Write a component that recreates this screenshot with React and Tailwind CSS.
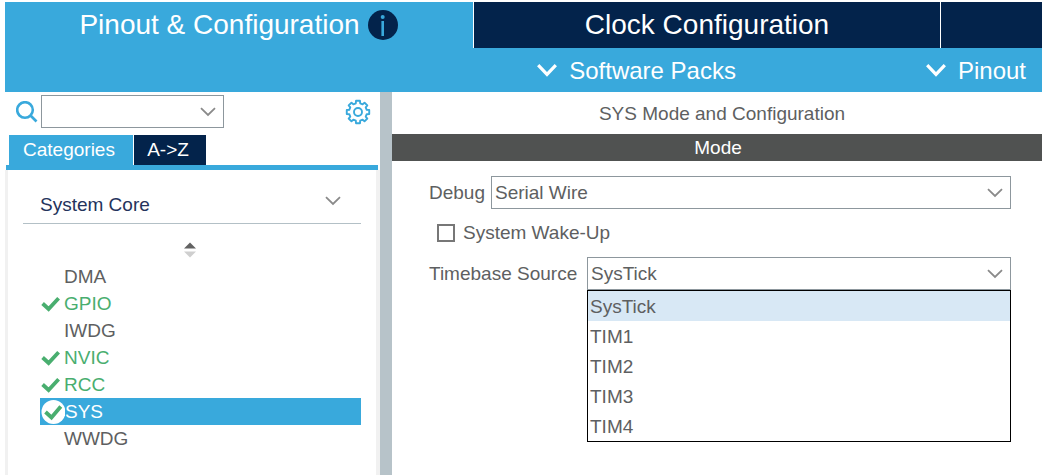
import React, { useState } from 'react';

const peripherals = [
  { name: 'DMA', enabled: false },
  { name: 'GPIO', enabled: true },
  { name: 'IWDG', enabled: false },
  { name: 'NVIC', enabled: true },
  { name: 'RCC', enabled: true },
  { name: 'SYS', enabled: true },
  { name: 'WWDG', enabled: false },
];

const timebaseSources = ['SysTick', 'TIM1', 'TIM2', 'TIM3', 'TIM4'];

// Outline of an 8-tooth gear centred on 13,13
const gearPoints = Array.from({ length: 8 }, (_, i) =>
  [[-14, 9], [-10, 11.4], [10, 11.4], [14, 9]].map(([offset, r]) => {
    const a = ((i * 45 + offset) * Math.PI) / 180;
    return `${(13 + r * Math.sin(a)).toFixed(2)},${(13 - r * Math.cos(a)).toFixed(2)}`;
  }).join(' ')
).join(' ');

function GearIcon() {
  return (
    <svg width="26" height="26" viewBox="0 0 26 26" fill="none" stroke="#39a9dc" strokeWidth="1.9" strokeLinejoin="round">
      <polygon points={gearPoints} />
      <circle cx="13" cy="13" r="4" />
    </svg>
  );
}

function SearchIcon() {
  return (
    <svg className="shrink-0" width="22" height="22" viewBox="0 0 22 22" fill="none" stroke="#39a9dc" strokeWidth="2.6">
      <circle cx="9" cy="9" r="7.8" />
      <path d="M14.5 14.5l6 6" />
    </svg>
  );
}

function Chevron({ className = '' }) {
  return (
    <svg className={className} width="16" height="10" viewBox="0 0 16 10" fill="none" stroke="#8a8a8a" strokeWidth="1.8">
      <path d="M1 1.2l7 6.8 7-6.8" />
    </svg>
  );
}

function MenuChevron() {
  return (
    <svg width="20" height="14" viewBox="0 0 20 14" fill="none" stroke="#fff" strokeWidth="3.2">
      <path d="M1.2 1.2L10 10.4l8.8-9.2" />
    </svg>
  );
}

function InfoIcon() {
  return (
    <svg width="30" height="30" viewBox="0 0 30 30">
      <circle cx="15" cy="15" r="15" fill="#03234b" />
      <circle cx="14.7" cy="7" r="2" fill="#39a9dc" />
      <path d="M14.7 11v15" stroke="#39a9dc" strokeWidth="2.6" />
    </svg>
  );
}

function Check({ circled }) {
  return (
    <svg width="24" height="24" viewBox="0 0 24 24" fill="none" className="shrink-0">
      {circled && <circle cx="12.5" cy="12" r="12" fill="#fff" />}
      <path
        d={circled ? 'M4.5 12l6 5.5L19.8 6.6' : 'M2.6 11.5l6 5.5L18.6 6.2'}
        stroke="#49ae6f"
        strokeWidth="3.8"
      />
    </svg>
  );
}

function Header() {
  return (
    <header className="bg-[#39a9dc] text-white">
      <nav className="grid grid-cols-[468fr_467fr_102fr] h-[45px] text-[28px] leading-[46px]">
        <button className="flex items-center justify-center gap-2 pr-px">
          Pinout &amp; Configuration
          <InfoIcon />
        </button>
        <button className="bg-[#03234b] border-l border-white">Clock Configuration</button>
        <button className="bg-[#03234b] border-l border-white" aria-label="Project Manager" />
      </nav>
      <div className="flex justify-end gap-[190px] h-[45px] pt-[2px] pr-4 text-2xl">
        <button className="flex items-center gap-3">
          <MenuChevron />
          Software Packs
        </button>
        <button className="flex items-center gap-3">
          <MenuChevron />
          Pinout
        </button>
      </div>
    </header>
  );
}

function Sidebar({ selected, onSelect }) {
  const [tab, setTab] = useState('categories');

  return (
    <aside className="w-[375px] shrink-0 flex flex-col">
      <div className="flex items-center h-[43px] pl-[11px] pr-[9px] pb-1">
        <SearchIcon />
        <div className="relative ml-[3px]">
          <input
            aria-label="Search"
            className="block w-[183px] h-[33px] border border-[#8d979d] pl-1 pr-8 outline-none"
          />
          <Chevron className="absolute right-2 top-3" />
        </div>
        <button className="ml-auto" aria-label="Settings">
          <GearIcon />
        </button>
      </div>

      <div className="flex gap-px h-[30px] pl-1 leading-[30px] text-white">
        <button
          onClick={() => setTab('categories')}
          className={`w-[124px] pr-1 ${tab === 'categories' ? 'bg-[#39a9dc]' : 'bg-[#03234b]'}`}
        >
          Categories
        </button>
        <button
          onClick={() => setTab('az')}
          className={`w-[72px] pr-1 ${tab === 'az' ? 'bg-[#39a9dc]' : 'bg-[#03234b]'}`}
        >
          A-&gt;Z
        </button>
      </div>

      <div className="h-[5px] ml-px mr-[2px] bg-[#39a9dc]" />
      <div className="flex-1 border-l-3 border-r-4 border-[#f1f1f1] px-[15px]">
        <button className="flex items-center justify-between w-full h-[54px] pt-4 pl-[17px] pr-5 border-b border-[#b3c0c6] text-[#24335c]">
          System Core
          <Chevron className="mb-2" />
        </button>

        <div className="flex justify-center h-[39px] pt-[18px] pr-1">
          <svg width="12" height="16" viewBox="0 0 12 16">
            <path d="M0 6.5L6 .5l6 6z" fill="#626262" />
            <path d="M0 9.5h12l-6 6z" fill="#cfcfcf" />
          </svg>
        </div>

        <ul className="pl-[17px]">
          {peripherals.map(({ name, enabled }) => {
            const active = name === selected;
            return (
              <li key={name}>
                <button
                  onClick={() => onSelect(name)}
                  className={`flex items-center w-full h-[27px] ${active ? 'bg-[#39a9dc] text-white pl-px' : enabled ? 'text-[#49ae6f]' : 'text-[#5e5f61]'}`}
                >
                  {enabled ? <Check circled={active} /> : <span className="w-6" />}
                  {name}
                </button>
              </li>
            );
          })}
        </ul>
      </div>
    </aside>
  );
}

function SelectBox({ id, value, onChange, options }) {
  return (
    <div className="relative flex-1">
      <select
        id={id}
        value={value}
        onChange={(e) => onChange(e.target.value)}
        className="appearance-none block w-full h-[33px] pl-[3px] pr-8 border border-[#8d979d] bg-white outline-none"
      >
        {options.map((option) => (
          <option key={option}>{option}</option>
        ))}
      </select>
      <Chevron className="absolute right-2 top-3 pointer-events-none" />
    </div>
  );
}

function ModePanel({ name }) {
  const [debug, setDebug] = useState('Serial Wire');
  const [wakeUp, setWakeUp] = useState(false);
  const [timebase, setTimebase] = useState('SysTick');
  const [open, setOpen] = useState(true);

  return (
    <main className="flex-1 text-[#5e5f61]">
      <h1 className="h-[42px] pl-[10px] leading-[44px] text-center">{name} Mode and Configuration</h1>
      <h2 className="h-[27px] pl-[2px] leading-[27px] text-center bg-[#505251] text-white">Mode</h2>

      <div className="pt-[15px] pl-[37px] pr-[31px]">
        <div className="flex items-center gap-[6px]">
          <label htmlFor="debug">Debug</label>
          <SelectBox
            id="debug"
            value={debug}
            onChange={setDebug}
            options={['Disable', 'Serial Wire', 'JTAG (4 pins)', 'JTAG (5 pins)']}
          />
        </div>

        <label className="flex items-center gap-2 h-12 pl-2">
          <input
            type="checkbox"
            checked={wakeUp}
            onChange={(e) => setWakeUp(e.target.checked)}
            className="appearance-none size-[18px] border-2 border-[#777] checked:bg-[#39a9dc]"
          />
          System Wake-Up
        </label>

        <div className="flex items-center gap-[6px]">
          <label htmlFor="timebase" className="min-w-[152px]">Timebase Source</label>
          <div className="relative flex flex-1">
            <SelectBox id="timebase" value={timebase} onChange={setTimebase} options={timebaseSources} />
            {open && (
              <ul role="listbox" aria-label="Timebase Source" className="absolute top-full inset-x-0 border border-black bg-white">
                {timebaseSources.map((source) => (
                  <li
                    key={source}
                    role="option"
                    aria-selected={source === timebase}
                    onClick={() => {
                      setTimebase(source);
                      setOpen(false);
                    }}
                    className={`h-[30px] pl-[2px] leading-[32px] ${source === timebase ? 'bg-[#d8e8f5]' : ''}`}
                  >
                    {source}
                  </li>
                ))}
              </ul>
            )}
          </div>
        </div>
      </div>
    </main>
  );
}

function App() {
  const [selected, setSelected] = useState('SYS');

  return (
    <div className="flex flex-col min-h-screen pt-[2px] pl-[5px] bg-white text-[19px] leading-6 font-['Liberation_Sans',Arial,sans-serif]">
      <Header />
      <div className="flex flex-1">
        <Sidebar selected={selected} onSelect={setSelected} />
        <div className="w-3 shrink-0 bg-[#b7c3c9]" />
        <ModePanel name={selected} />
      </div>
    </div>
  );
}

export default App;
